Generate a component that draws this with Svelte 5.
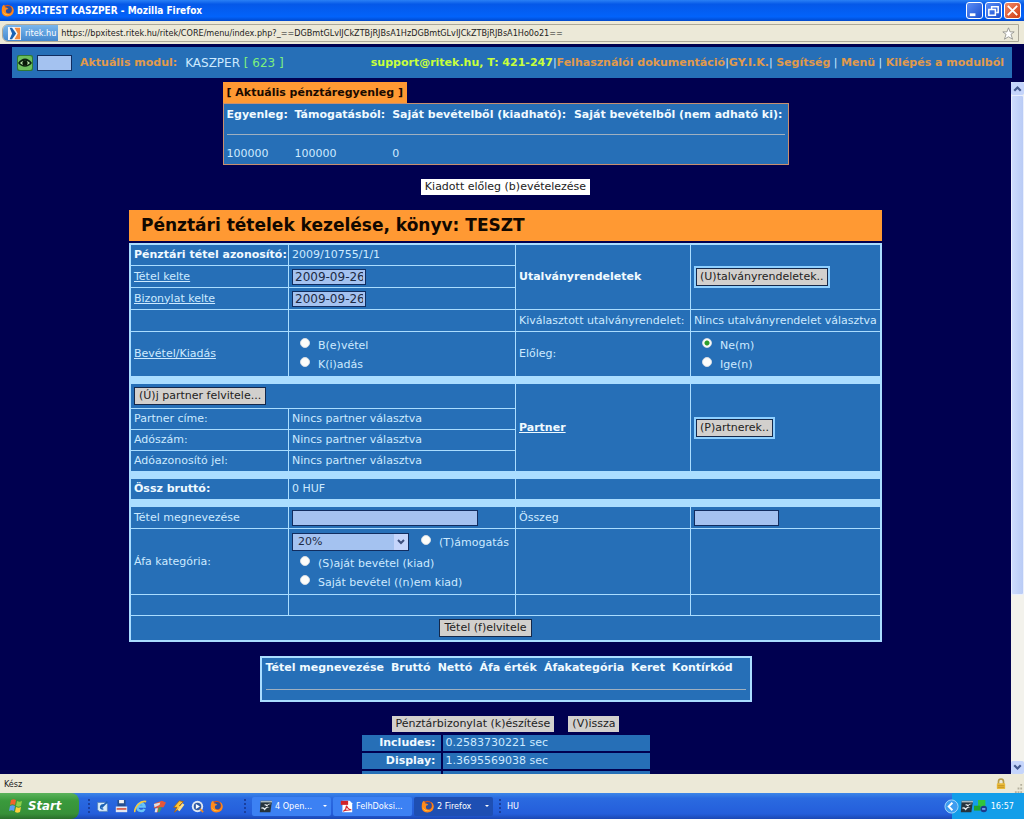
<script>
    let date1 = $state("2009-09-26");
    let date2 = $state("2009-09-26");
    let direction = $state("");
    let advance = $state("nem");
    let source = $state("");
    let itemName = $state("");
    let amount = $state("");
    let vat = $state("20%");
    let moduleCode = $state("");

    const links = ["GY.I.K.", "Segítség", "Menü", "Kilépés a modulból"];
    const itemHeads = ["Tétel megnevezése", "Bruttó", "Nettó", "Áfa érték", "Áfakategória", "Keret", "Kontírkód"];
    const partnerRows = ["Partner címe:", "Adószám:", "Adóazonosító jel:"];
</script>

{#snippet firefox()}
    <svg class="ico" viewBox="0 0 16 16" aria-hidden="true">
        <circle cx="8" cy="8" r="7" fill="#d9541a" />
        <circle cx="8.5" cy="7" r="4.6" fill="#2c4f9e" />
        <path d="M1 6C1 3 3 1 4 1l1 3c2 0 3 1 4 2-2 0-3 1-3 3 0 3 4 4 6 2 3-3 2-6 0-9 4 2 5 7 2 11-4 4-12 3-13-3z" fill="#ff8a1c" />
        <path d="M2 8c1 4 5 6 9 4-3 3-8 2-9-4z" fill="#ffd24a" />
    </svg>
{/snippet}

{#snippet openoffice()}
    <svg class="ico" viewBox="0 0 16 16" aria-hidden="true">
        <path d="M2 1h14l-2 14H1z" fill="#26343c" />
        <path d="M6 6c2-1 3-1 4 0 1-1 3-2 5-1-2 0-4 1-5 3-1-1-2-2-4-2z" fill="#fff" />
        <path d="M2 10c2-2 4-1 5 0 2-2 4-2 6-1-3 0-4 1-6 4-1-2-3-3-5-3z" fill="#e8eef0" />
        <path d="M2 1h14v2H2z" fill="#a9b8bd" />
    </svg>
{/snippet}

<div class="window">
    <header class="titlebar">
        {@render firefox()}
        <span class="caption">BPXI-TEST KASZPER - Mozilla Firefox</span>
        <button class="winbtn" aria-label="Kis méret">
            <svg viewBox="0 0 16 16"><path d="M3 11h6v3H3z" fill="#fff" /></svg>
        </button>
        <button class="winbtn" aria-label="Előző méret">
            <svg viewBox="0 0 16 16"><path d="M6 6V4h7v6h-2M3 7h7v6H3z" fill="none" stroke="#fff" stroke-width="1.6" /></svg>
        </button>
        <button class="winbtn close" aria-label="Bezárás">
            <svg viewBox="0 0 16 16"><path d="M3 3l10 10M13 3L3 13" stroke="#fff" stroke-width="2" /></svg>
        </button>
    </header>

    <div class="urlbar">
        <div class="urlbox">
            <span class="site">
                <svg viewBox="0 0 16 16" aria-hidden="true">
                    <path d="M0 0h16v16H0z" fill="#f4f6fa" />
                    <path d="M2 1h3l5 7-5 7H2l3-7z" fill="#1d63b4" />
                    <path d="M8 1h7v14H8l4-7z" fill="#f58a3c" />
                </svg>
                ritek.hu
            </span>
            <span class="url">https://bpxitest.ritek.hu/ritek/CORE/menu/index.php?_==DGBmtGLvIJCkZTBjRJBsA1HzDGBmtGLvIJCkZTBjRJBsA1Ho0o21==</span>
            <svg class="star" viewBox="0 0 16 16" aria-hidden="true">
                <path d="M8 1l2 5h5l-4 3 2 6-5-3-5 3 2-6-4-3h5z" fill="#fff" stroke="#8c8c88" />
            </svg>
        </div>
    </div>

    <main class="page">
        <nav class="modulebar">
            <svg class="eye" viewBox="0 0 16 16" aria-hidden="true">
                <rect width="16" height="16" rx="2" fill="#2f7a35" />
                <rect x="1" y="1" width="14" height="14" rx="2" fill="#6cbf5d" />
                <path d="M1 8c4-6 10-6 14 0-4 5-10 5-14 0z" fill="#0b2410" />
                <path d="M3 8c3-3 7-3 10 0-3 3-7 3-10 0z" fill="#b9e6a8" />
                <circle cx="8" cy="8" r="2.6" fill="#081808" />
            </svg>
            <input class="code" type="text" aria-label="Modul kódja" bind:value={moduleCode} />
            <b class="orange">Aktuális modul:</b>
            <span class="modname">KASZPER <span class="green">[ 623 ]</span></span>
            <div class="links">
                <b class="yellow">support@ritek.hu, T: 421-247</b>|<a href="#doc">Felhasználói dokumentáció</a>|<a href="#gyik">{links[0]}</a>|&nbsp;<a href="#help">{links[1]}</a>&nbsp;|&nbsp;<a href="#menu">{links[2]}</a>&nbsp;|&nbsp;<a href="#exit">{links[3]}</a>
            </div>
        </nav>

        <div class="frame">
            <div class="content">
                <section class="balance">
                    <h2>[ Aktuális pénztáregyenleg ]</h2>
                    <table>
                        <thead>
                            <tr><th>Egyenleg:</th><th>Támogatásból:</th><th>Saját bevételből (kiadható):</th><th>Saját bevételből (nem adható ki):</th></tr>
                        </thead>
                        <tbody>
                            <tr><td colspan="4"><hr /></td></tr>
                            <tr class="values"><td>100000</td><td>100000</td><td>0</td><td></td></tr>
                        </tbody>
                    </table>
                </section>

                <button class="btn white">Kiadott előleg (b)evételezése</button>

                <section class="entry">
                    <h1>Pénztári tételek kezelése, könyv: TESZT</h1>
                    <table class="form">
                        <colgroup><col class="c1" /><col class="c2" /><col class="c3" /><col /></colgroup>
                        <tbody>
                            <tr class="row">
                                <th>Pénztári tétel azonosító:</th>
                                <td>2009/10755/1/1</td>
                                <th rowspan="3">Utalványrendeletek</th>
                                <td rowspan="3"><button class="btn dark ring">(U)talványrendeletek..</button></td>
                            </tr>
                            <tr class="row mid">
                                <td><label class="u" for="date1">Tétel kelte</label></td>
                                <td><input class="field date" id="date1" type="text" bind:value={date1} /></td>
                            </tr>
                            <tr class="row mid">
                                <td><label class="u" for="date2">Bizonylat kelte</label></td>
                                <td><input class="field date" id="date2" type="text" bind:value={date2} /></td>
                            </tr>
                            <tr class="row mid">
                                <td></td>
                                <td></td>
                                <td>Kiválasztott utalványrendelet:</td>
                                <td>Nincs utalványrendelet választva</td>
                            </tr>
                            <tr class="double">
                                <td><a class="u" href="#direction">Bevétel/Kiadás</a></td>
                                <td>
                                    <label class="radio"><input type="radio" value="be" bind:group={direction} />B(e)vétel</label>
                                    <label class="radio"><input type="radio" value="ki" bind:group={direction} />K(i)adás</label>
                                </td>
                                <td>Előleg:</td>
                                <td>
                                    <label class="radio"><input type="radio" value="nem" bind:group={advance} />Ne(m)</label>
                                    <label class="radio"><input type="radio" value="igen" bind:group={advance} />Ige(n)</label>
                                </td>
                            </tr>
                            <tr class="band"><td colspan="4"></td></tr>
                            <tr class="tall">
                                <td colspan="2"><button class="btn dark">(Ú)j partner felvitele...</button></td>
                                <th rowspan="4"><a class="u" href="#partner">Partner</a></th>
                                <td rowspan="4"><button class="btn dark ring">(P)artnerek..</button></td>
                            </tr>
                            {#each partnerRows as name}
                                <tr class="row">
                                    <td>{name}</td>
                                    <td>Nincs partner választva</td>
                                </tr>
                            {/each}
                            <tr class="band"><td colspan="4"></td></tr>
                            <tr class="row">
                                <th>Össz bruttó:</th>
                                <td>0 HUF</td>
                                <td colspan="2"></td>
                            </tr>
                            <tr class="band"><td colspan="4"></td></tr>
                            <tr class="row mid">
                                <td><label for="item">Tétel megnevezése</label></td>
                                <td><input class="field wide" id="item" type="text" bind:value={itemName} /></td>
                                <td><label for="amount">Összeg</label></td>
                                <td><input class="field sum" id="amount" type="text" bind:value={amount} /></td>
                            </tr>
                            <tr class="triple">
                                <td><label for="vat">Áfa kategória:</label></td>
                                <td>
                                    <div class="vatline">
                                        <span class="pick">
                                            <select id="vat" bind:value={vat}>
                                                <option>20%</option>
                                                <option>0%</option>
                                            </select>
                                            <svg viewBox="0 0 14 16" aria-hidden="true">
                                                <path d="M0 0h14v16H0z" fill="#c5d5fb" />
                                                <path d="M4 6l3 3 3-3" fill="none" stroke="#3d4f7c" stroke-width="2" />
                                            </svg>
                                        </span>
                                        <label class="radio"><input type="radio" value="t" bind:group={source} />(T)ámogatás</label>
                                    </div>
                                    <label class="radio"><input type="radio" value="s" bind:group={source} />(S)aját bevétel (kiad)</label>
                                    <label class="radio"><input type="radio" value="n" bind:group={source} />Saját bevétel ((n)em kiad)</label>
                                </td>
                                <td></td>
                                <td></td>
                            </tr>
                            <tr class="row"><td></td><td></td><td></td><td></td></tr>
                            <tr class="tall">
                                <td class="submit" colspan="4"><button class="btn dark">Tétel (f)elvitele</button></td>
                            </tr>
                        </tbody>
                    </table>
                </section>

                <section class="items">
                    <table>
                        <thead>
                            <tr>{#each itemHeads as head}<th>{head}</th>{/each}</tr>
                        </thead>
                    </table>
                    <hr />
                </section>

                <div class="actions">
                    <button class="btn">Pénztárbizonylat (k)észítése</button>
                    <button class="btn">(V)issza</button>
                </div>

                <table class="timing">
                    <tbody>
                        <tr><th>Includes:</th><td>0.2583730221 sec</td></tr>
                        <tr><th>Display:</th><td>1.3695569038 sec</td></tr>
                        <tr><th></th><td></td></tr>
                    </tbody>
                </table>
            </div>

            <div class="scrollbar" aria-hidden="true">
                <span class="arrow"><svg viewBox="0 0 12 12"><path d="M3 8l3-3 3 3" fill="none" stroke="#43598f" stroke-width="2" /></svg></span>
                <span class="thumb"></span>
                <span class="arrow"><svg viewBox="0 0 12 12"><path d="M3 4l3 3 3-3" fill="none" stroke="#43598f" stroke-width="2" /></svg></span>
            </div>
        </div>
    </main>

    <div class="statusbar">
        <span>Kész</span>
        <svg class="lock" viewBox="0 0 12 14" aria-hidden="true">
            <path d="M3 7V4c0-4 6-4 6 0v3" fill="none" stroke="#b49b4a" stroke-width="2" />
            <rect x="1" y="6" width="10" height="7" rx="1" fill="#e9bb3a" />
            <path d="M2 9h8M2 11h8" stroke="#c08f1f" />
        </svg>
        <svg class="grip" viewBox="0 0 10 10" aria-hidden="true">
            <path d="M7 0h2v2H7zM4 4h2v2H4zM7 4h2v2H7zM1 8h2v2H1zM4 8h2v2H4zM7 8h2v2H7z" fill="#b5b19f" />
        </svg>
    </div>

    <footer class="taskbar">
        <button class="start">
            <svg viewBox="0 0 16 16" aria-hidden="true">
                <path d="M3 2c2-1 3-1 5 0L7 7C5 6 4 6 2 7z" fill="#f2622c" />
                <path d="M9 3c2 1 3 1 5 0l-1 5c-2 1-3 1-5 0z" fill="#8ed04a" />
                <path d="M2 8c2-1 3-1 5 0l-1 5c-2-1-3-1-5 0z" fill="#5a9cf5" />
                <path d="M8 9c2 1 3 1 5 0l-1 5c-2 1-3 1-5 0z" fill="#fdd03b" />
            </svg>
            Start
        </button>
        <span class="dots"></span>
        <div class="quick">
            <svg class="ico" viewBox="0 0 16 16" aria-hidden="true">
                <path d="M2 3h10l2 2v9H4l-2-2z" fill="#d8ecfb" stroke="#5b86b4" />
                <path d="M10 6c-5-1-6 6-1 5M7 9l7-7" fill="none" stroke="#1b62b5" stroke-width="2" />
            </svg>
            <svg class="ico" viewBox="0 0 16 16" aria-hidden="true">
                <path d="M3 0h10v8H3z" fill="#27508f" />
                <path d="M5 0h6v4H5z" fill="#f1f1f1" />
                <path d="M1 8h14v7H1z" fill="#e4e7ee" />
                <path d="M2 10h12v2H2z" fill="#d4523e" />
            </svg>
            <svg class="ico" viewBox="0 0 16 16" aria-hidden="true">
                <path d="M13 11c-2 4-9 3-9-2s8-7 9-1H5" fill="none" stroke="#69c4f7" stroke-width="3" />
                <path d="M1 15C0 9 8 0 15 2" fill="none" stroke="#f7c93d" stroke-width="2" />
            </svg>
            <svg class="ico" viewBox="0 0 16 16" aria-hidden="true">
                <path d="M2 4l9-3 5 2-3 6H9l-3 6H3l2-6-4 1z" fill="#e4573a" />
                <path d="M1 5l8-2-1 3-6 3z" fill="#d9dfe3" />
                <path d="M7 9h4l-3 6H6z" fill="#3f9e5c" />
                <path d="M3 10h3l-1 5H2z" fill="#dfe4e8" />
            </svg>
            <svg class="ico" viewBox="0 0 16 16" aria-hidden="true">
                <path d="M9 1L2 9h4l-3 6 10-8H9l5-5z" fill="#ffc533" stroke="#a85d10" />
                <path d="M14 5L8 13" fill="none" stroke="#ffe08a" stroke-width="3" />
            </svg>
            <svg class="ico" viewBox="0 0 16 16" aria-hidden="true">
                <circle cx="8" cy="8" r="7" fill="#dfe7f2" />
                <circle cx="8" cy="8" r="4.6" fill="#2f5ba6" />
                <path d="M6 5l5 3-5 3z" fill="#fff" />
                <path d="M11 11l4 4" stroke="#f08a24" stroke-width="2" />
            </svg>
            {@render firefox()}
        </div>
        <span class="dots"></span>
        <div class="tasks">
            <button class="task">{@render openoffice()}<span>4 Open...</span><i class="down"></i></button>
            <button class="task">
                <svg class="ico" viewBox="0 0 16 16" aria-hidden="true">
                    <path d="M3 1h9l3 3v11H3z" fill="#fff" />
                    <path d="M1 1h9v5H1z" fill="#d2232a" />
                    <path d="M4 14c3-2 4-5 4-7 1 3 3 5 6 5-4 0-7 0-10 2z" fill="none" stroke="#d2232a" stroke-width="1.4" />
                </svg>
                <span>FelhDoksi...</span>
            </button>
            <button class="task active">{@render firefox()}<span>2 Firefox</span><i class="down"></i></button>
        </div>
        <span class="dots"></span>
        <span class="lang">HU</span>
        <div class="tray">
            <svg class="chev" viewBox="0 0 16 16" aria-hidden="true">
                <circle cx="8" cy="8" r="7" fill="#3d9df0" stroke="#a6d8fb" />
                <path d="M9 4L5 8l4 4" fill="none" stroke="#fff" stroke-width="2" />
            </svg>
            {@render openoffice()}
            <svg class="ico" viewBox="0 0 16 16" aria-hidden="true">
                <path d="M5 0h9v9H5z" fill="#31c53c" />
                <path d="M0 7h8v6H0z" fill="#1fa32c" />
                <circle cx="12" cy="11" r="4" fill="#1d3b8c" />
                <path d="M10 11h4" stroke="#7fa7ff" stroke-width="2" />
            </svg>
            <time>16:57</time>
        </div>
    </footer>
</div>

<style>
    :global(body) {
        background: #000050;
    }

    .window {
        display: flex;
        flex-direction: column;
        height: 100vh;
        overflow: hidden;
        font-family: "DejaVu Sans", Verdana, sans-serif;
        font-size: 11px;
        line-height: 14px;
        color: #cdeaff;
    }

    button, input, select {
        font: inherit;
        box-sizing: border-box;
        margin: 0;
    }

    .ico {
        flex: none;
        width: 13px;
        height: 13px;
    }

    .titlebar {
        flex: none;
        display: flex;
        align-items: center;
        gap: 2px;
        height: 21px;
        padding: 0 3px 0 1px;
        background: linear-gradient(#2a80f5 0, #0558e8 20%, #0263fb 80%, #0148cc 100%);
        color: #fff;
        font-family: "DejaVu Sans Condensed", "DejaVu Sans", sans-serif;
        font-size: 10px;
        font-weight: bold;
    }

    .caption {
        flex: 1;
        padding-left: 1px;
    }

    .winbtn {
        width: 17px;
        height: 17px;
        padding: 0;
        border: 1px solid #fff;
        border-radius: 3px;
        background: linear-gradient(135deg, #5b8df5, #1a4fd0);
    }

    .winbtn.close {
        background: linear-gradient(135deg, #f08a68, #d03c12);
    }

    .winbtn svg {
        display: block;
        width: 15px;
        height: 15px;
    }

    .urlbar {
        flex: none;
        padding: 3px 5px 2px 2px;
        background: #ece9d8;
        color: #222;
    }

    .urlbox {
        display: flex;
        align-items: center;
        height: 16px;
        border: 1px solid #aca899;
        border-radius: 6px 0 0 6px;
        overflow: hidden;
        font-family: "DejaVu Sans Condensed", "DejaVu Sans", sans-serif;
        font-size: 9px;
    }

    .site {
        display: flex;
        align-items: center;
        gap: 4px;
        height: 16px;
        padding: 0 2px 0 5px;
        background: linear-gradient(#79b6ec, #4488cf);
        color: #fff;
    }

    .site svg {
        width: 13px;
        height: 13px;
    }

    .url {
        flex: 1;
        padding-left: 3px;
        white-space: nowrap;
    }

    .star {
        width: 13px;
        height: 13px;
        margin-right: 3px;
    }

    .page {
        flex: 1;
        display: flex;
        flex-direction: column;
        min-height: 0;
        background: #000050;
    }

    .modulebar {
        flex: none;
        display: flex;
        align-items: center;
        height: 31px;
        margin: 3px 12px 4px;
        padding: 0 8px 0 5px;
        box-sizing: border-box;
        background: #266fb7;
        white-space: nowrap;
    }

    .eye {
        width: 16px;
        height: 16px;
    }

    .code {
        width: 35px;
        height: 16px;
        margin: 0 8px 0 4px;
        border: 1px solid #112d60;
        background: #a4c2f0;
    }

    .orange, .links a {
        color: #e09a4c;
        font-weight: bold;
        text-decoration: none;
    }

    .modname {
        padding-left: 8px;
        font-size: 12px;
    }

    .green {
        color: #7df07d;
    }

    .yellow {
        color: #c8ff3c;
    }

    .links {
        margin-left: auto;
    }

    .frame {
        flex: 1;
        display: flex;
        min-height: 0;
    }

    .content {
        flex: 1;
        display: flex;
        flex-direction: column;
        align-items: center;
        overflow: hidden;
    }

    .content > * {
        flex: none;
    }

    table {
        border-spacing: 0;
    }

    th, td {
        padding: 0 3px;
        text-align: left;
        white-space: nowrap;
    }

    th {
        color: #f0faff;
    }

    hr {
        height: 1px;
        margin: 0;
        border: 0;
        background: #9fb0c0;
    }

    .balance {
        margin-bottom: 14px;
    }

    .balance h2 {
        width: fit-content;
        margin: 0;
        padding: 0 4px;
        background: #ff9933;
        color: #1a0a00;
        font-size: 11px;
        line-height: 21px;
    }

    .balance table {
        width: 566px;
        border: 1px solid #c98f6e;
        background: #266fb7;
    }

    .balance th {
        height: 22px;
    }

    .balance td[colspan] {
        height: 17px;
    }

    .balance .values {
        height: 21px;
    }

    .btn {
        height: 16px;
        padding: 0 4px;
        border: 0;
        background: #d2d0cd;
        color: #222;
        line-height: 14px;
        white-space: nowrap;
    }

    .btn.white {
        background: #fff;
        margin-bottom: 15px;
    }

    .btn.dark {
        height: 18px;
        border: 1px solid #14284a;
    }

    .btn.ring {
        outline: 2px solid #8fd0ff;
        margin-left: 2px;
        padding: 0 3px;
    }

    .entry {
        width: 100%;
        max-width: 753px;
        margin-bottom: 14px;
    }

    .entry h1 {
        margin: 0 0 2px;
        padding-left: 12px;
        background: #ff9933;
        color: #120800;
        font-size: 17px;
        line-height: 31px;
    }

    .form {
        width: 100%;
        table-layout: fixed;
        border: 1px solid #aaddff;
        border-spacing: 1px;
        background: #aaddff;
    }

    .form th, .form td {
        background: #266fb7;
    }

    .form .band td {
        height: 6px;
        background: #aaddff;
    }

    .c1 {
        width: 157px;
    }

    .c2 {
        width: 226px;
    }

    .c3 {
        width: 174px;
    }

    .row {
        height: 20px;
    }

    .mid {
        height: 21px;
    }

    .double {
        height: 44px;
    }

    .tall {
        height: 24px;
    }

    .triple {
        height: 65px;
    }

    .u {
        color: inherit;
        text-decoration: underline;
    }

    .form .submit {
        padding-right: 43px;
        text-align: center;
    }

    .field {
        display: block;
        height: 16px;
        padding: 0 2px;
        border: 1px solid #112d60;
        background: #a4c2f0;
        color: #1c2a44;
    }

    .date {
        width: 74px;
        font-size: 12px;
    }

    .wide {
        width: 186px;
    }

    .sum {
        width: 85px;
    }

    .radio {
        display: flex;
        gap: 8px;
        padding: 3px 0 0 8px;
        line-height: 16px;
    }

    .radio input {
        appearance: none;
        width: 10px;
        height: 10px;
        border: 1px solid #d5dce4;
        border-radius: 50%;
        background: #fdfdfa;
    }

    .radio input:checked {
        background: radial-gradient(circle, #2c9e2c 0 2px, #fdfdfa 3px);
    }

    .vatline {
        display: flex;
        align-items: center;
        gap: 4px;
        margin-bottom: 2px;
    }

    .pick {
        display: grid;
        grid-template-columns: 1fr 14px;
        width: 117px;
        height: 18px;
        box-sizing: border-box;
        border: 1px solid #112d60;
        background: #a4c2f0;
    }

    .pick select {
        appearance: none;
        border: 0;
        padding: 0 5px;
        background: none;
        color: #1c2a44;
    }

    .pick svg {
        width: 14px;
        height: 16px;
    }

    .items {
        width: 492px;
        max-width: 100%;
        height: 46px;
        box-sizing: border-box;
        margin-bottom: 14px;
        padding: 3px 4px;
        border: 2px solid #aaddff;
        background: #266fb7;
    }

    .items table {
        margin-bottom: 14px;
    }

    .items th {
        padding: 0 7px 0 0;
    }

    .actions {
        display: flex;
        gap: 14px;
        margin-bottom: 1px;
    }

    .timing {
        width: 292px;
        border-spacing: 2px;
    }

    .timing th, .timing td {
        height: 16px;
        background: #266fb7;
        line-height: 14px;
    }

    .timing th {
        width: 71px;
        padding-right: 5px;
        text-align: right;
    }

    .scrollbar {
        flex: none;
        display: flex;
        flex-direction: column;
        width: 13px;
        background: #f3f2ec;
    }

    .arrow {
        height: 13px;
        border-radius: 2px;
        background: #c5d5fb;
    }

    .arrow svg {
        display: block;
        width: 13px;
        height: 13px;
    }

    .thumb {
        height: 498px;
        border: 1px solid #e9effd;
        border-radius: 2px;
        background: linear-gradient(90deg, #cddcfd, #b9cbf5);
    }

    .arrow:last-child {
        margin-top: auto;
    }

    .statusbar {
        flex: none;
        display: flex;
        align-items: center;
        height: 19px;
        padding: 0 1px 0 4px;
        background: #ece9d8;
        color: #222;
        font-family: "DejaVu Sans Condensed", "DejaVu Sans", sans-serif;
        font-size: 9px;
    }

    .lock {
        width: 10px;
        height: 12px;
        margin: 0 8px 0 auto;
    }

    .grip {
        width: 9px;
        height: 9px;
        align-self: flex-end;
    }

    .taskbar {
        flex: none;
        display: flex;
        align-items: center;
        height: 26px;
        background: linear-gradient(#3c86e8 0, #2a6ae0 20%, #245edb 80%, #1c48b4 100%);
        color: #fff;
        font-family: "DejaVu Sans Condensed", "DejaVu Sans", sans-serif;
        font-size: 9px;
    }

    .start {
        display: flex;
        align-items: center;
        gap: 4px;
        width: 79px;
        height: 26px;
        margin-right: 8px;
        padding: 0 0 0 8px;
        border: 0;
        border-radius: 0 8px 8px 0;
        background: linear-gradient(#5cb35c, #3a9a3c 30%, #379038 80%, #2a6e2b);
        color: #fff;
        font-size: 13px;
        font-style: italic;
        font-weight: bold;
    }

    .start svg {
        width: 16px;
        height: 16px;
    }

    .dots {
        width: 4px;
        height: 16px;
        background: radial-gradient(circle, #1a3f9e 1px, transparent 1px) 0 0 / 4px 4px;
    }

    .quick {
        display: flex;
        gap: 6px;
        width: 142px;
        padding: 0 5px;
    }

    .quick + .dots {
        margin-right: 5px;
    }

    .tasks {
        display: flex;
        gap: 2px;
        margin-right: 5px;
    }

    .task {
        display: flex;
        align-items: center;
        gap: 3px;
        width: 79px;
        height: 19px;
        padding: 0 4px 0 7px;
        border: 0;
        border-radius: 2px;
        background: #3c81f3;
        color: #fff;
        white-space: nowrap;
    }

    .task.active {
        background: #1e4fb3;
    }

    .down {
        margin-left: auto;
        border: 2px solid transparent;
        border-top-color: #fff;
        border-bottom: 0;
    }

    .lang {
        padding-left: 5px;
    }

    .tray {
        display: flex;
        align-items: center;
        gap: 1px;
        height: 26px;
        margin-left: auto;
        padding: 0 10px 0 0;
        background: linear-gradient(90deg, transparent 8px, #139ee9 8px);
    }

    .chev {
        width: 15px;
        height: 15px;
    }

    .tray time {
        padding-left: 3px;
    }
</style>
